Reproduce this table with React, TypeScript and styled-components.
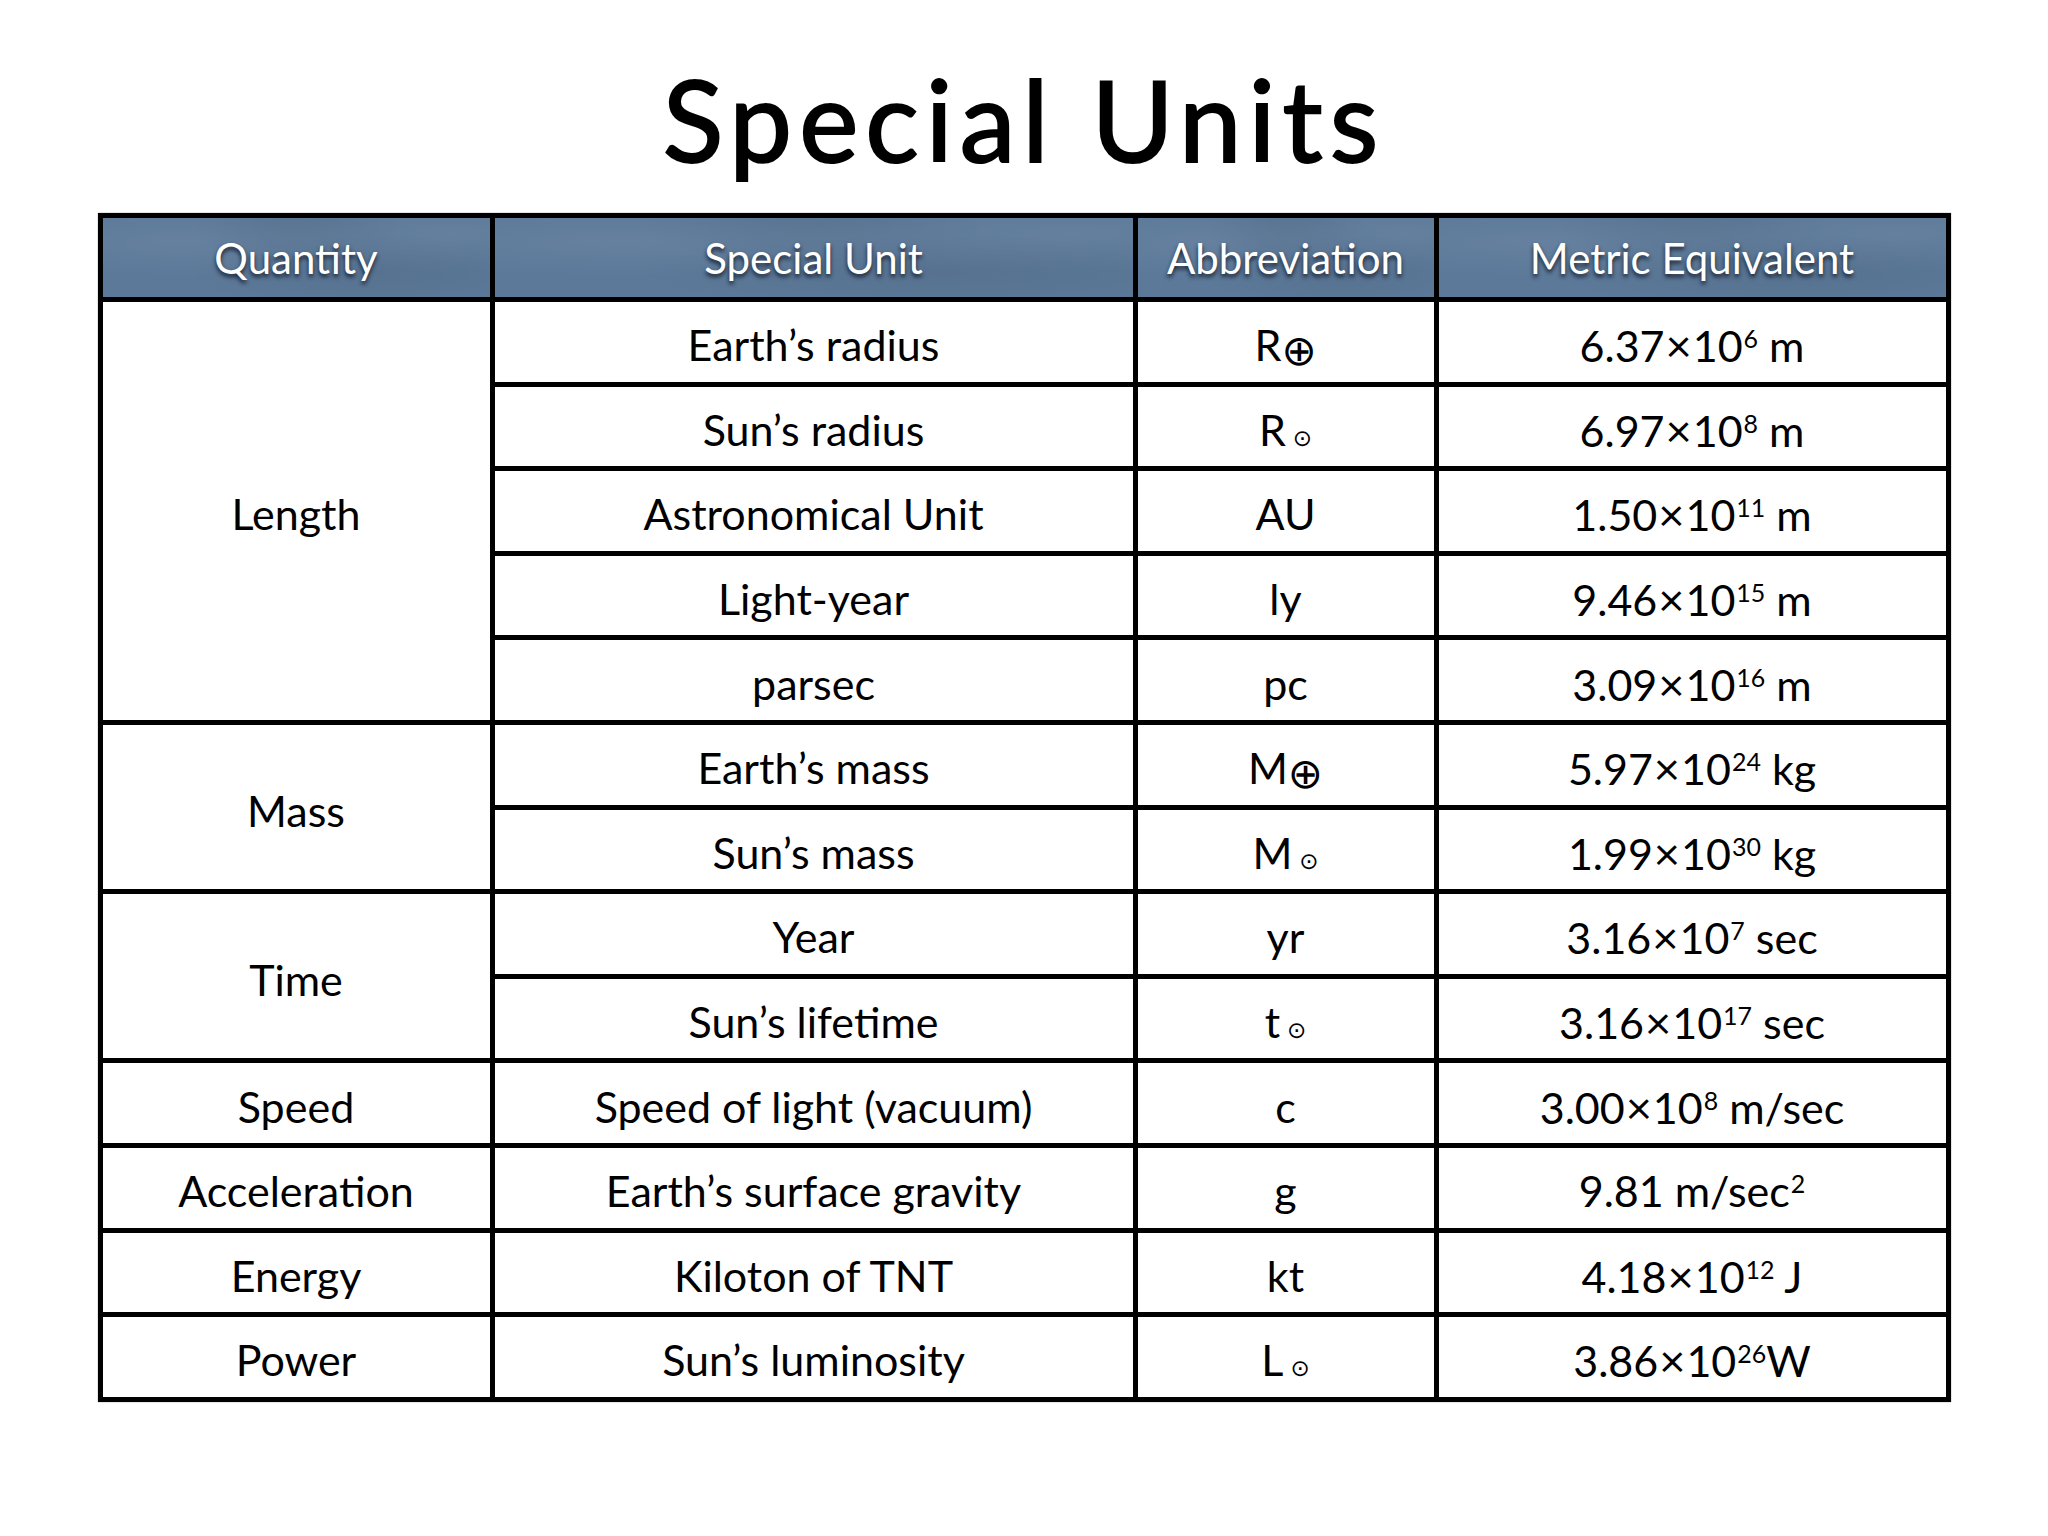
import React from "react"
import styled, { createGlobalStyle } from "styled-components"

const GlobalStyle = createGlobalStyle`
    html, body {
        margin: 0;
        padding: 0;
        background: #ffffff;
    }
    body {
        font-family: "Gill Sans", "Lato", "Liberation Sans", sans-serif;
        color: #000;
    }
`

interface UnitRow {
    unit: string
    abbr: React.ReactNode
    metric: React.ReactNode
}

interface UnitGroup {
    quantity: string
    rows: UnitRow[]
}

const Sup = styled.sup`
    font-size: 0.58em;
    line-height: 0;
    vertical-align: 14px;
    margin-left: 1px;
`

const Earth = styled.span`
    font-family: "DejaVu Sans", sans-serif;
    font-size: 42px;
    line-height: 0;
    vertical-align: -4px;
    margin-left: 0;
`

const Sun = styled.span`
    font-family: "DejaVu Sans", sans-serif;
    font-size: 23px;
    line-height: 0;
    margin-left: 7px;
`

const Times = styled.span`
    font-size: 1.05em;
    margin: 0 1px;
`

const sci = (base: string, exp: string, unit: string) => <>
    {base}<Times>×</Times>10<Sup>{exp}</Sup> {unit}
</>

const groups: UnitGroup[] = [
    {
        quantity: "Length",
        rows: [
            { unit: "Earth’s radius", abbr: <>R<Earth>⊕</Earth></>, metric: sci("6.37", "6", "m") },
            { unit: "Sun’s radius", abbr: <>R<Sun>⊙</Sun></>, metric: sci("6.97", "8", "m") },
            { unit: "Astronomical Unit", abbr: "AU", metric: sci("1.50", "11", "m") },
            { unit: "Light-year", abbr: "ly", metric: sci("9.46", "15", "m") },
            { unit: "parsec", abbr: "pc", metric: sci("3.09", "16", "m") },
        ],
    },
    {
        quantity: "Mass",
        rows: [
            { unit: "Earth’s mass", abbr: <>M<Earth>⊕</Earth></>, metric: sci("5.97", "24", "kg") },
            { unit: "Sun’s mass", abbr: <>M<Sun>⊙</Sun></>, metric: sci("1.99", "30", "kg") },
        ],
    },
    {
        quantity: "Time",
        rows: [
            { unit: "Year", abbr: "yr", metric: sci("3.16", "7", "sec") },
            { unit: "Sun’s lifetime", abbr: <>t<Sun>⊙</Sun></>, metric: sci("3.16", "17", "sec") },
        ],
    },
    {
        quantity: "Speed",
        rows: [
            { unit: "Speed of light (vacuum)", abbr: "c", metric: sci("3.00", "8", "m/sec") },
        ],
    },
    {
        quantity: "Acceleration",
        rows: [
            { unit: "Earth’s surface gravity", abbr: "g", metric: <>9.81 m/sec<Sup>2</Sup></> },
        ],
    },
    {
        quantity: "Energy",
        rows: [
            { unit: "Kiloton of TNT", abbr: "kt", metric: sci("4.18", "12", "J") },
        ],
    },
    {
        quantity: "Power",
        rows: [
            { unit: "Sun’s luminosity", abbr: <>L<Sun>⊙</Sun></>, metric: <>3.86<Times>×</Times>10<Sup>26</Sup>W</> },
        ],
    },
]

const headers = ["Quantity", "Special Unit", "Abbreviation", "Metric Equivalent"]

export default function App() {
    let rowLine = 2

    return <>
        <GlobalStyle />
        <Page>
            <Title>Special Units</Title>
            <Table>
                {headers.map((h) => <HeadCell key={h}>{h}</HeadCell>)}
                {groups.map((group) => {
                    const start = rowLine
                    rowLine += group.rows.length
                    return <React.Fragment key={group.quantity}>
                        <Cell $col={1} $row={start} $span={group.rows.length}>
                            <CellText>{group.quantity}</CellText>
                        </Cell>
                        {group.rows.map((row, i) => <React.Fragment key={row.unit}>
                            <Cell $col={2} $row={start + i}><CellText>{row.unit}</CellText></Cell>
                            <Cell $col={3} $row={start + i}><CellText>{row.abbr}</CellText></Cell>
                            <Cell $col={4} $row={start + i}><CellText>{row.metric}</CellText></Cell>
                        </React.Fragment>)}
                    </React.Fragment>
                })}
            </Table>
        </Page>
    </>
}

const Page = styled.div`
    width: 2048px;
    height: 1536px;
    display: flex;
    flex-direction: column;
    align-items: center;
    padding-top: 52px;
    box-sizing: border-box;
    background: #fff;
`

const Title = styled.h1`
    margin: 0 0 27px 0;
    height: 134px;
    font-family: "Bradley Hand", "Segoe Print", "Comic Sans MS", "Lato", sans-serif;
    font-size: 112px;
    font-weight: 400;
    line-height: 134px;
    letter-spacing: 7px;
    -webkit-text-stroke: 2px #000;
    color: #000;
`

const Table = styled.div`
    width: 1853px;
    box-sizing: border-box;
    display: grid;
    grid-template-columns: 387px 638px 296px 507px;
    grid-template-rows: 79px repeat(13, 79.6px);
    gap: 5px;
    padding: 5px;
    background: #000;
    box-shadow: 0 0 1px rgba(0, 0, 0, 0.6);
`

const HeadCell = styled.div`
    display: flex;
    align-items: center;
    justify-content: center;
    font-size: 42px;
    color: #fff;
    text-shadow: 0 3px 4px rgba(15, 22, 35, 0.9);
    background-color: #5c7999;
    background-image:
        radial-gradient(ellipse at 20% 30%, rgba(255, 255, 255, 0.06), transparent 45%),
        radial-gradient(ellipse at 70% 70%, rgba(0, 0, 0, 0.06), transparent 50%),
        radial-gradient(ellipse at 50% 10%, rgba(0, 0, 0, 0.05), transparent 40%),
        radial-gradient(ellipse at 90% 20%, rgba(255, 255, 255, 0.05), transparent 40%);
`

const Cell = styled.div<{ $col: number; $row: number; $span?: number }>`
    grid-column: ${(p) => p.$col};
    grid-row: ${(p) => p.$row} / span ${(p) => p.$span ?? 1};
    display: flex;
    align-items: center;
    justify-content: center;
    padding-top: 6px;
    box-sizing: border-box;
    background: #fff;
    font-size: 43px;
`

const CellText = styled.span`
    white-space: nowrap;
`
